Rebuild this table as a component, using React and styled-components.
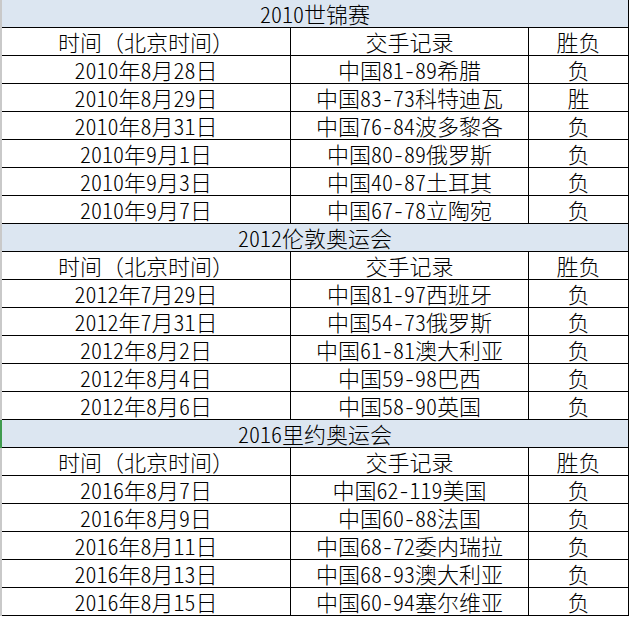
import React from "react";
import styled, { createGlobalStyle } from "styled-components";

const GlobalStyle = createGlobalStyle`
  html, body {
    margin: 0;
    padding: 0;
    background: #ffffff;
  }
  body {
    font-family: "Noto Sans CJK SC", "Noto Sans", sans-serif;
  }
`;

const Sheet = styled.div`
  width: 629px;
  display: flex;
  flex-direction: column;
  font-family: "Noto Sans CJK SC", sans-serif;
  font-size: 22px;
  font-weight: 300;
  color: #000;
`;

const Row = styled.div`
  display: grid;
  grid-template-columns: 289px 238px 100px;
  border-left: 2px solid ${(p) => (p.$active ? "#3f9b4f" : "#c9c9c9")};
`;

const Cell = styled.div`
  box-sizing: border-box;
  height: 28px;
  line-height: 27px;
  border-right: 1px solid #000;
  border-bottom: 1px solid #000;
  text-align: center;
  white-space: nowrap;
  font-feature-settings: ${(p) => (p.$full ? "normal" : '"hwid" 1')};
  background: ${(p) => (p.$title ? "#dce6f1" : "#ffffff")};
  grid-column: ${(p) => (p.$span ? "1 / -1" : "auto")};
`;

const sections = [
  {
    title: "2010世锦赛",
    rows: [
      ["2010年8月28日", "中国81-89希腊", "负"],
      ["2010年8月29日", "中国83-73科特迪瓦", "胜"],
      ["2010年8月31日", "中国76-84波多黎各", "负"],
      ["2010年9月1日", "中国80-89俄罗斯", "负"],
      ["2010年9月3日", "中国40-87土耳其", "负"],
      ["2010年9月7日", "中国67-78立陶宛", "负"],
    ],
  },
  {
    title: "2012伦敦奥运会",
    rows: [
      ["2012年7月29日", "中国81-97西班牙", "负"],
      ["2012年7月31日", "中国54-73俄罗斯", "负"],
      ["2012年8月2日", "中国61-81澳大利亚", "负"],
      ["2012年8月4日", "中国59-98巴西", "负"],
      ["2012年8月6日", "中国58-90英国", "负"],
    ],
  },
  {
    title: "2016里约奥运会",
    active: true,
    rows: [
      ["2016年8月7日", "中国62-119美国", "负"],
      ["2016年8月9日", "中国60-88法国", "负"],
      ["2016年8月11日", "中国68-72委内瑞拉", "负"],
      ["2016年8月13日", "中国68-93澳大利亚", "负"],
      ["2016年8月15日", "中国60-94塞尔维亚", "负"],
    ],
  },
];

const header = ["时间（北京时间）", "交手记录", "胜负"];

function Section({ title, rows, active }) {
  return (
    <>
      <Row $active={active}>
        <Cell $title $span>
          {title}
        </Cell>
      </Row>
      <Row>
        {header.map((h) => (
          <Cell key={h} $full>
            {h}
          </Cell>
        ))}
      </Row>
      {rows.map((r) => (
        <Row key={r[0]}>
          {r.map((c, i) => (
            <Cell key={i}>{c}</Cell>
          ))}
        </Row>
      ))}
    </>
  );
}

export default function App() {
  return (
    <>
      <GlobalStyle />
      <Sheet>
        {sections.map((s) => (
          <Section key={s.title} {...s} />
        ))}
      </Sheet>
    </>
  );
}
